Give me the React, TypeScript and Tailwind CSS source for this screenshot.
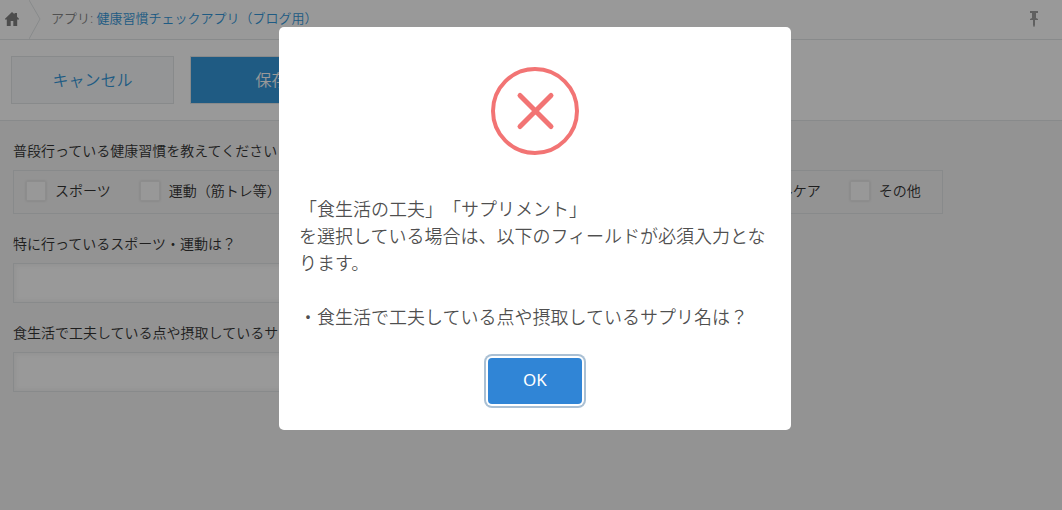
import { useState } from 'react';

const habits = [
  'スポーツ',
  '運動（筋トレ等）',
  '食生活の工夫',
  'サプリメント',
  '睡眠管理',
  'メンタルケア',
  'その他',
];

function HomeIcon() {
  return (
    <svg width="14" height="14" viewBox="0 0 14 14" fill="#808080" aria-hidden="true">
      <path d="M7 0 9.5 2.3V1H12V4.7L14 6.8V7.5H12.2V14H8.3V9H5.7V14H1.8V7.5H0V6.8Z" />
    </svg>
  );
}

function PinIcon() {
  return (
    <svg width="8" height="16" viewBox="0 0 8 16" fill="#a0a0a0" aria-hidden="true">
      <path d="M0 0H8V2H6V7L8 8V9H5V14L4.3 16H3.7L3 14V9H0V8L2 7V2H0Z" />
    </svg>
  );
}

function ErrorIcon() {
  return (
    <svg width="88" height="88" viewBox="0 0 88 88" fill="none" stroke="#f27474" aria-hidden="true">
      <circle cx="44" cy="44" r="42" strokeWidth="4" />
      <path d="M29 28.5 60 59.5M60 28.5 29 59.5" strokeWidth="5" strokeLinecap="round" />
    </svg>
  );
}

function TextField({ id, label }: { id: string; label: string }) {
  return (
    <div>
      <label htmlFor={id} className="block mb-2.5 leading-[19px]">
        {label}
      </label>
      <input
        id={id}
        type="text"
        className="block w-full max-w-[480px] h-10 px-2 bg-white border border-[#e3e7e8] shadow-[inset_2px_2px_4px_#f5f5f5,inset_-2px_-2px_4px_#f5f5f5] outline-none"
      />
    </div>
  );
}

function AlertDialog({ onClose }: { onClose: () => void }) {
  return (
    <div className="fixed inset-0 flex items-start justify-center bg-black/40 pt-[27px] pl-2">
      <div
        role="alertdialog"
        aria-modal="true"
        aria-describedby="alert-text"
        className="flex flex-col items-center w-full max-w-[512px] bg-white rounded-[5px] px-5 pt-10 pb-[26px]"
      >
        <ErrorIcon />
        <p
          id="alert-text"
          className="w-full mt-[41px] text-lg leading-[27px] text-black/70 [text-spacing-trim:space-all]"
        >
          「食生活の工夫」「サプリメント」
          <br />
          を選択している場合は、以下のフィールドが必須入力となります。
          <br />
          <br />
          ・食生活で工夫している点や摂取しているサプリ名は？
        </p>
        <button
          type="button"
          onClick={onClose}
          className="mt-[27px] w-[94px] h-[46px] pb-0.5 rounded bg-[#3085d6] text-[17px] font-normal text-white outline-none shadow-[0_0_0_2px_#fff,0_0_0_4px_#aac0d4]"
        >
          OK
        </button>
      </div>
    </div>
  );
}

export default function App() {
  const [open, setOpen] = useState(true);

  return (
    <div
      lang="ja"
      className="min-h-screen bg-[#f5f5f5] text-sm font-[350] text-[#333] font-['Noto_Sans','Noto_Sans_CJK_JP',sans-serif]"
    >
      <header className="flex items-center h-10 pb-0.5 bg-white border-b border-[#e3e7e8] text-[13px]">
        <a href="#" aria-label="ホーム" className="pl-[5px]">
          <HomeIcon />
        </a>
        <svg width="12" height="39" viewBox="0 0 12 39" fill="none" stroke="#e3e7e8" className="mx-2.5 -mb-0.5" aria-hidden="true">
          <path d="M0 0 11 19 0 39" />
        </svg>
        <p className="flex-1 pb-px text-[#888] [text-spacing-trim:space-all]">
          アプリ:{' '}
          <a href="#" className="text-[#3498db]">
            健康習慣チェックアプリ（ブログ用）
          </a>
        </p>
        <button type="button" aria-label="固定" className="mr-6">
          <PinIcon />
        </button>
      </header>

      <div className="flex gap-4 px-[11px] py-4 bg-white border-b border-[#e3e7e8] text-base">
        <button type="button" className="w-[163px] h-12 bg-[#f7f9fa] border border-[#e3e7e8] text-[#3498db]">
          キャンセル
        </button>
        <button type="button" className="w-[163px] h-12 bg-[#3498db] border border-[#e3e7e8] text-white">
          保存
        </button>
      </div>

      <main className="flex flex-col gap-5 px-[13px] py-5">
        <fieldset>
          <legend className="block mb-2.5 leading-[19px]">普段行っている健康習慣を教えてください</legend>
          <div className="flex items-center gap-[29px] w-fit h-11 pb-0.5 pl-3 pr-[21px] border border-[#e3e7e8] whitespace-nowrap [text-spacing-trim:space-all]">
            {habits.map((habit) => (
              <label key={habit} className="flex items-center gap-[9px]">
                <input
                  type="checkbox"
                  className="appearance-none w-5 h-5 bg-[#fdfdfd] border border-[#ebebeb] shadow-[0_0_2px_#d4d4d4]"
                />
                {habit}
              </label>
            ))}
          </div>
        </fieldset>
        <TextField id="sports" label="特に行っているスポーツ・運動は？" />
        <TextField id="diet" label="食生活で工夫している点や摂取しているサプリ名は？" />
      </main>

      {open && <AlertDialog onClose={() => setOpen(false)} />}
    </div>
  );
}
